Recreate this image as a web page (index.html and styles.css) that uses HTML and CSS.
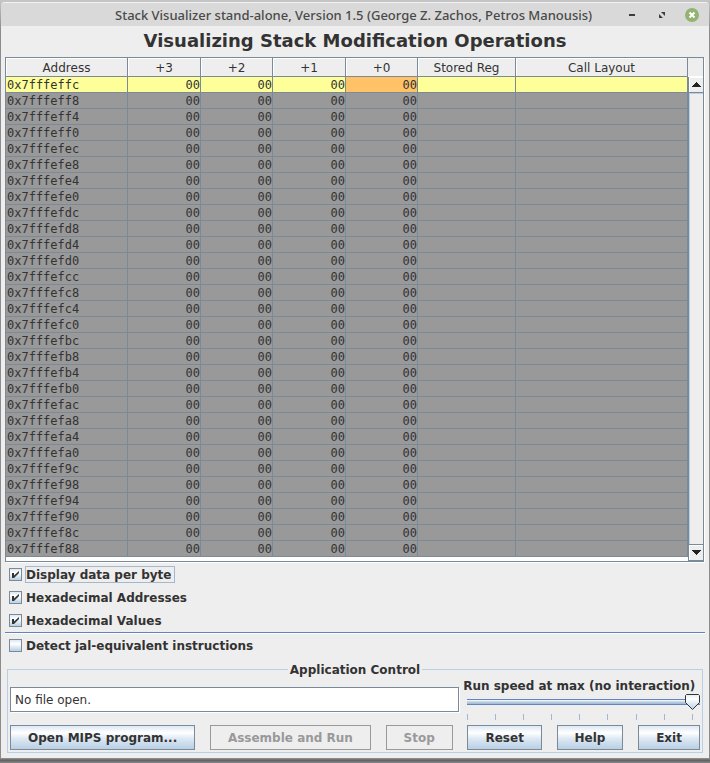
FILE: index.html
```html
<!DOCTYPE html>
<html lang="en">
<head>
<meta charset="utf-8">
<title>Stack Visualizer</title>
<link rel="stylesheet" href="styles.css">
</head>
<body>
<div class="window">
  <header class="titlebar">
    <span class="caption">Stack Visualizer stand-alone, Version 1.5 (George Z. Zachos, Petros Manousis)</span>
    <div class="window-buttons">
      <button class="window-button" type="button" aria-label="Minimize"><svg width="14" height="14" viewBox="0 0 14 14"><path d="M4 6h6v2H4z" fill="#3c3c3c"/></svg></button>
      <button class="window-button" type="button" aria-label="Restore"><svg width="14" height="14" viewBox="0 0 14 14"><path d="M6 4h4v4zM4 6l4 4H4z" fill="#3c3c3c"/></svg></button>
      <button class="window-button" type="button" aria-label="Close"><svg width="14" height="14" viewBox="0 0 14 14"><circle cx="7" cy="7" r="7" fill="#92b372"/><path d="M4.500 4.500l5 5M9.500 4.500l-5 5" stroke="#fff" stroke-width="2"/></svg></button>
    </div>
  </header>
  <main class="content">
    <h1 class="heading">Visualizing Stack Modification Operations</h1>
    <div class="scroll-pane">
      <table class="stack">
        <colgroup><col class="col-address"><col class="col-odd"><col class="col-even"><col class="col-odd"><col class="col-even"><col class="col-reg"><col class="col-call"></colgroup>
        <thead><tr><th>Address</th><th>+3</th><th>+2</th><th>+1</th><th>+0</th><th>Stored Reg</th><th>Call Layout</th></tr></thead>
        <tbody id="rows"></tbody>
      </table>
      <div class="scrollbar">
        <div class="corner"></div>
        <button class="scroll-button" type="button" aria-label="Scroll up"><svg width="9" height="5" viewBox="0 0 9 5" shape-rendering="crispEdges"><path d="M4 0h1v1h1v1h1v1h1v1h1v1H0V4h1V3h1V2h1V1h1z" fill="#222"/></svg></button>
        <div class="track"></div>
        <button class="scroll-button" type="button" aria-label="Scroll down"><svg width="9" height="5" viewBox="0 0 9 5" shape-rendering="crispEdges"><path d="M4 5h1V4h1V3h1V2h1V1h1V0H0v1h1v1h1v1h1v1h1z" fill="#222"/></svg></button>
      </div>
    </div>
    <div class="options">
      <label class="option"><input type="checkbox" checked><span class="option-text focused">Display data per byte</span></label>
      <label class="option"><input type="checkbox" checked><span class="option-text">Hexadecimal Addresses</span></label>
      <label class="option"><input type="checkbox" checked><span class="option-text">Hexadecimal Values</span></label>
    </div>
    <hr class="divider">
    <label class="option"><input type="checkbox"><span class="option-text">Detect jal-equivalent instructions</span></label>
    <fieldset class="control">
      <legend>Application Control</legend>
      <div class="status-row">
        <input class="file" type="text" value="No file open." aria-label="Program file" readonly>
        <div class="speed">
          <label for="speed">Run speed at max (no interaction)</label>
          <input id="speed" type="range" min="0" max="40" value="40">
          <div class="ticks"><i></i><i></i><i></i><i></i><i></i><i></i><i></i><i></i><i></i></div>
        </div>
      </div>
      <div class="buttons">
        <button class="button" type="button">Open MIPS program...</button>
        <button class="button" type="button" disabled>Assemble and Run</button>
        <button class="button" type="button" disabled>Stop</button>
        <button class="button" type="button">Reset</button>
        <button class="button" type="button">Help</button>
        <button class="button" type="button">Exit</button>
      </div>
    </fieldset>
  </main>
</div>
<script src="stack.js"></script>
</body>
</html>
```
FILE: styles.css
```css
* { box-sizing: border-box; }

body {
  margin: 0;
  min-height: 100vh;
  padding: 2px 1px 3px;
  background: linear-gradient(#c6c6c6, #8c8c8c 30px, #8c8c8c calc(100% - 4px), #5c5c5c calc(100% - 3px), #888);
  color: #333;
  font: bold 12px/16px "DejaVu Sans", sans-serif;
}

.window {
  background: #eee;
  border-radius: 4px 4px 0 0;
  overflow: hidden;
}

.titlebar {
  display: flex;
  align-items: center;
  height: 24px;
  padding: 0 10px 0 114px;
  background: #d9d9d9;
  border-top: 1px solid #f2f2f2;
  color: #4a4a4a;
  font: 500 13px/22px "Noto Sans", sans-serif;
}

.caption {
  flex: 1;
  white-space: nowrap;
}

.window-buttons {
  display: flex;
  gap: 16px;
}

.window-button {
  width: 14px;
  height: 14px;
  padding: 0;
  border: 0;
  background: none;
}

.window-button svg { display: block; }

.content { padding: 0 4px 5px; }

.heading {
  margin: 0;
  padding: 4px 0 5px;
  font-size: 18px;
  line-height: 22px;
  text-align: center;
}

.scroll-pane {
  display: flex;
  margin-right: 1px;
  padding-bottom: 4px;
  background: #fff;
  border: 1px solid #7a8a99;
  border-right: 0;
  box-shadow: 1px 1px #fff;
}

.stack {
  flex: 1;
  min-width: 0;
  table-layout: fixed;
  border-spacing: 0;
  font-weight: normal;
}

.col-address { width: 122px; }
.col-odd { width: 73px; }
.col-even { width: 72px; }
.col-reg { width: 98px; }
.col-call { width: 172px; }

.stack th,
.stack td {
  border-right: 1px solid #7a8a99;
  border-bottom: 1px solid #7a8a99;
}

.stack th {
  height: 19px;
  padding: 2px 0 0;
  line-height: 16px;
  background: #eee;
  box-shadow: inset 1px 1px #fff;
  font-weight: normal;
}

.stack td {
  height: 16px;
  padding: 1px 0 0 1px;
  line-height: 14px;
  background: #999;
  font-family: "DejaVu Sans Mono", monospace;
  text-align: right;
}

.stack td:first-child { text-align: left; }
.stack .top td { background: #ff9; }
.stack .top .pointer { background: #ffc266; }

.scrollbar {
  display: flex;
  flex-direction: column;
  width: 16px;
  margin-bottom: -4px;
  background: #eee;
  border-right: 1px solid #7a8a99;
}

.corner {
  height: 19px;
  border-bottom: 1px solid #fff;
}

.scroll-button {
  display: flex;
  align-items: center;
  justify-content: center;
  height: 16px;
  padding: 0;
  background: #eee;
  border: 0 solid #7a8a99;
  border-width: 0 0 1px 1px;
  box-shadow: inset 1px 1px #fff;
}

.track {
  flex: 1;
  border: solid #7a8a99;
  border-width: 0 0 1px 1px;
  box-shadow: inset 1px 1px #b8cfe5;
}

.options { padding-top: 1px; }

.option {
  display: flex;
  align-items: center;
  gap: 3px;
  height: 23px;
  padding-left: 4px;
}

.option-text {
  padding: 1px 3px 0 0;
  border: 1px solid transparent;
  line-height: 14px;
}

.focused { border-color: #a3b8cc; }

input[type="checkbox"] {
  appearance: none;
  width: 13px;
  height: 13px;
  margin: 0;
  border: 1px solid #7a8a99;
  background: linear-gradient(#dde8f3, #fff 35%, #b8cfe5);
}

input[type="checkbox"]:checked {
  background: url("data:image/svg+xml,%3Csvg xmlns='http://www.w3.org/2000/svg' viewBox='0 0 11 11'%3E%3Cpath d='M2 4h2v2.500L9 2v2L4 9H2z' fill='%23333'/%3E%3C/svg%3E"), linear-gradient(#dde8f3, #fff 35%, #b8cfe5);
}

.divider {
  height: 2px;
  margin: 0;
  border: 0;
  border-top: 1px solid #6382bf;
  background: #fff;
}

.control {
  min-width: 0;
  margin: 4px 2px 0;
  padding: 0 2px 2px;
  border: 1px solid #b8cfe5;
}

.control legend {
  margin: 0 auto;
  padding: 1px 2px 0;
}

.status-row {
  display: flex;
  align-items: flex-start;
}

.file {
  flex: 1;
  min-width: 0;
  height: 25px;
  margin-top: 9px;
  padding: 0 4px;
  border: 1px solid #7a8a99;
  box-shadow: 1px 1px #fff;
  background: #fff;
  color: #333;
  font: 12px "DejaVu Sans", sans-serif;
}

.speed {
  flex: 0 0 35%;
}

.speed label {
  display: block;
  text-align: center;
  white-space: nowrap;
}

#speed {
  appearance: none;
  display: block;
  width: calc(100% - 8px);
  height: 16px;
  margin: 0 0 0 8px;
  background: linear-gradient(#6382bf 1px, #fff 1px, #b8cfe5 3px, #a3b8cc 5px, #6382bf 5px) 0 5px / 100% 6px no-repeat;
}

#speed::-webkit-slider-thumb {
  appearance: none;
  width: 15px;
  height: 16px;
  background: url("data:image/svg+xml,%3Csvg xmlns='http://www.w3.org/2000/svg' viewBox='0 0 15 16'%3E%3Cdefs%3E%3ClinearGradient id='g' x2='0' y2='1'%3E%3Cstop stop-color='%23e4edf6'/%3E%3Cstop offset='.3' stop-color='white'/%3E%3Cstop offset='1' stop-color='%23b8cfe5'/%3E%3C/linearGradient%3E%3C/defs%3E%3Cpath d='M1.500.5h12l1 1v7l-7 7-7-7v-7z' fill='url(%23g)' stroke='%23333'/%3E%3C/svg%3E");
}

.ticks {
  display: flex;
  justify-content: space-between;
  margin: 4px 7px 0 8px;
}

.ticks i {
  width: 1px;
  height: 6px;
  background: #a3b8cc;
}

.buttons {
  display: flex;
  justify-content: space-between;
  padding-top: 5px;
}

.button {
  height: 25px;
  padding: 0 17px;
  border: 1px solid #7a8a99;
  background: linear-gradient(#dde8f3, #fff 30%, #dde8f3 55%, #b8cfe5);
  color: #333;
  font: bold 12px "DejaVu Sans", sans-serif;
  white-space: nowrap;
}

.button:disabled {
  background: #eee;
  border-color: #999;
  color: #999;
}
```
FILE: stack.js
```js
const body = document.getElementById("rows");
const firstAddress = 0x7fffeffc;
for (let i = 0; i < 30; i++) {
  const row = body.insertRow();
  if (i === 0) row.className = "top";
  row.insertCell().textContent = "0x" + (firstAddress - i * 4).toString(16);
  for (let b = 3; b >= 0; b--) {
    const cell = row.insertCell();
    cell.textContent = "00";
    if (b === 0) cell.className = "pointer";
  }
  row.insertCell();
  row.insertCell();
}
```
